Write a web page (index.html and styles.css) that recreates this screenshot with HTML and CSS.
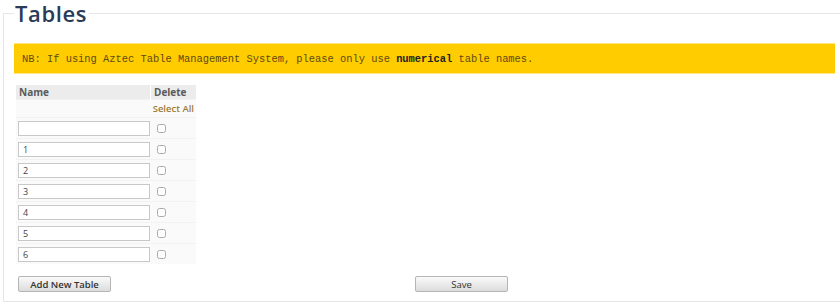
FILE: index.html
```html
<!DOCTYPE html>
<html lang="en">
<head>
    <meta charset="UTF-8">
    <title>Tables</title>
    <link rel="stylesheet" href="styles.css">
</head>
<body>

<fieldset class="panel">
    <legend>Tables</legend>

    <div class="notice">NB: If using Aztec Table Management System, please only use <b>numerical</b> table names.</div>

    <table class="tables">
        <thead>
            <tr>
                <th class="col-name">Name</th>
                <th class="col-delete">Delete</th>
            </tr>
        </thead>
        <tbody>
            <tr class="select-row">
                <td></td>
                <td><a href="#" class="select-all">Select All</a></td>
            </tr>
            <tr><td><input type="text" value=""></td><td><input type="checkbox"></td></tr>
            <tr><td><input type="text" value="1"></td><td><input type="checkbox"></td></tr>
            <tr><td><input type="text" value="2"></td><td><input type="checkbox"></td></tr>
            <tr><td><input type="text" value="3"></td><td><input type="checkbox"></td></tr>
            <tr><td><input type="text" value="4"></td><td><input type="checkbox"></td></tr>
            <tr><td><input type="text" value="5"></td><td><input type="checkbox"></td></tr>
            <tr><td><input type="text" value="6"></td><td><input type="checkbox"></td></tr>
        </tbody>
    </table>

    <div class="actions">
        <button class="btn">Add New Table</button>
        <button class="btn btn-save">Save</button>
    </div>
</fieldset>

</body>
</html>
```

FILE: styles.css
```css
body {
    margin: 0;
    padding-top: 1px;
    font-family: "Open Sans", Arial, sans-serif;
    background-color: #fff;
    color: #333;
    overflow: hidden;
}

.panel {
    margin: 0 0 0 3px;
    width: 840px;
    padding: 18px 10px 9px 10px;
    border: 1px solid #e6e6e6;
    border-right: none;
    box-sizing: content-box;
}

.panel legend {
    padding: 0 2px 0 1px;
    margin-left: 0;
    font-size: 22px;
    font-weight: 600;
    letter-spacing: 0.6px;
    line-height: 24px;
    color: #2b3a58;
}

.notice {
    width: 821px;
    height: 31px;
    line-height: 30px;
    padding-left: 8px;
    background-color: #ffcc00;
    border-top: 1px solid #ffe680;
    border-bottom: 1px solid #ffe680;
    box-sizing: border-box;
    font-family: "Liberation Mono", "Courier New", monospace;
    font-size: 10.4px;
    color: #5e4a14;
}

.notice b {
    color: #222;
}

.tables {
    margin: 11px 0 0 2px;
    border-collapse: collapse;
    background-color: #fafafa;
    font-size: 10px;
    line-height: 14px;
}

.tables th {
    height: 14px;
    padding: 0 3px;
    text-align: left;
    font-weight: 700;
    color: #5a5a5a;
    background-color: #ececec;
}

.tables th.col-name {
    width: 128px;
    border-right: 1px solid #fff;
}

.tables th.col-delete {
    width: 39px;
}

.tables td {
    height: 20px;
    padding: 0;
    border-top: 1px solid #f2f2f2;
}

.tables td:first-child {
    padding-left: 2px;
}

.select-row td {
    height: 17px;
    text-align: right;
    padding-right: 2px;
}

.select-all {
    font-size: 9.5px;
    font-weight: 600;
    color: #9c7a35;
    text-decoration: none;
}

.tables input[type="text"] {
    display: block;
    width: 132px;
    height: 15px;
    margin: 0;
    padding: 0 4px;
    border: 1px solid #c8c8c8;
    box-sizing: border-box;
    background: #fff;
    font-family: "Open Sans", Arial, sans-serif;
    font-size: 9px;
    color: #444;
}

.tables input[type="checkbox"] {
    display: block;
    width: 9px;
    height: 9px;
    margin: 0 0 0 6px;
    accent-color: #ccc;
    opacity: 0.6;
}

.actions {
    display: flex;
    margin-top: 12px;
    padding-left: 4px;
}

.btn {
    width: 93px;
    height: 16px;
    padding: 0;
    border: 1px solid #b5b5b5;
    border-radius: 2px;
    background: linear-gradient(#fafafa, #dcdcdc);
    font-family: "Open Sans", Arial, sans-serif;
    font-size: 9.5px;
    font-weight: 600;
    color: #333;
}

.btn-save {
    margin-left: 304px;
    font-weight: 400;
}
```
